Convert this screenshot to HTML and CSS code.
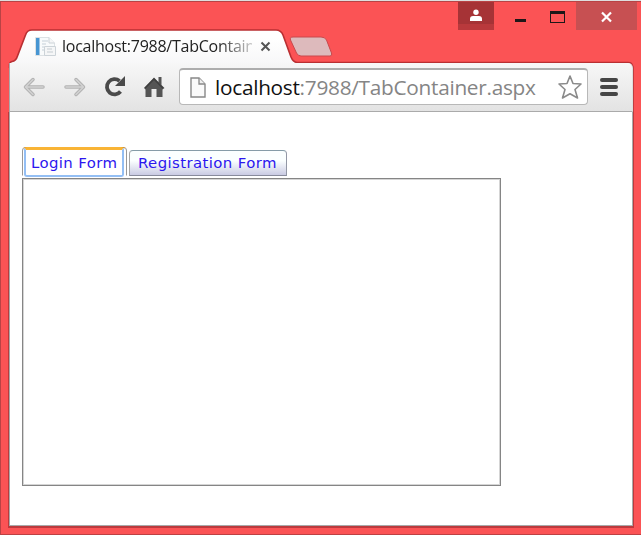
FILE: index.html
```html
<!DOCTYPE html>
<html lang="en">
<head>
<meta charset="utf-8">
<title>localhost:7988/TabContainer.aspx</title>
<link rel="stylesheet" href="styles.css">
</head>
<body>
<div class="window">
  <header class="titlebar">
    <svg class="frame" width="641" height="68" viewBox="0 0 641 68">
      <defs><linearGradient id="tabfill" x1="0" y1="0" x2="0" y2="1"><stop offset="0.2" stop-color="#fff"/><stop offset="1" stop-color="#f6f6f7"/></linearGradient></defs>
      <path d="M9.5 68V65Q9.500 62 12 61.500Q16 61 17.500 56L25.500 35Q27 30 32 30H276Q281 30 283 35L291 57Q293 62 297 62.500H628Q632.500 62.500 632.500 67V68Z" fill="url(#tabfill)" stroke="#b92f32" stroke-width="1.600"/>
      <path d="M293 37H321Q325 37 326.500 40L331.500 53Q332.500 56 330 56H301Q298 56 296.500 53L290.500 40Q289.500 37 293 37Z" fill="#ddbabc" stroke="#c9494c"/>
    </svg>
    <div class="browser-tab">
      <svg class="favicon" width="22" height="21" viewBox="0 0 22 21">
        <path d="M.500 1.500H14L19.500 7V19.500H.500Z" fill="#f8fafb" stroke="#dce1e4"/>
        <path d="M1 2H4.500V19H1Z" fill="#4795d2"/>
        <path d="M7 5H13M7 8H11M7 11H9M7 14H9" stroke="#c5d0d8"/>
        <path d="M14 1.500V7H19.500M9.500 10.500H20.500V19.500H9.500Z" fill="#f5f6f7" stroke="#ccd3d8"/>
        <path d="M12 13H17M12 16H18" stroke="#c5ccd1"/>
      </svg>
      <span class="tab-title">localhost:7988/TabContain</span>
      <svg class="tab-close" width="11" height="11" viewBox="0 0 11 11"><path d="M1.500 1.500L9.500 9.500M9.500 1.500L1.500 9.500" stroke="#555" stroke-width="2"/></svg>
    </div>
    <div class="controls">
      <div class="user"><svg width="14" height="13" viewBox="0 0 14 13"><circle cx="7" cy="3.200" r="2.700" fill="#fff"/><path d="M1 12V10Q1 7 4 7H10Q13 7 13 10V12Z" fill="#fff"/></svg></div>
      <div class="minimize"></div>
      <div class="maximize"></div>
      <div class="close"><svg width="13" height="12" viewBox="0 0 13 12"><path d="M2 1.500L11 10.500M11 1.500L2 10.500" stroke="#fff" stroke-width="2.200"/></svg></div>
    </div>
  </header>
  <nav class="toolbar">
    <svg class="nav-icons" width="160" height="48" viewBox="9 63 160 48">
      <g fill="none" stroke-linecap="round" stroke-linejoin="round">
        <path d="M26 87H43M33 79.500L25.500 87L33 94.500" stroke="#b2b2b2" stroke-width="3.500"/>
        <path d="M26 87H43M33 79.500L25.500 87L33 94.500" stroke="#d2d2d2" stroke-width="1.500"/>
        <path d="M66 87H83M76 79.500L83.500 87L76 94.500" stroke="#b2b2b2" stroke-width="3.500"/>
        <path d="M66 87H83M76 79.500L83.500 87L76 94.500" stroke="#d2d2d2" stroke-width="1.500"/>
      </g>
      <path d="M119.500 81A7.600 7.600 0 1 0 120.500 91.500" fill="none" stroke="#4a4a4a" stroke-width="3.800"/>
      <path d="M125 76V86H115Z" fill="#4a4a4a"/>
      <path d="M144 88L154 77.500L158.500 82V77H161.500V85L164.500 88L162.500 89.500V97H156.500V89H151.500V97H145.500V89.500Z" fill="#555"/>
      <path d="M145 88.300L154 79L163 88.300" fill="none" stroke="#3f3f3f" stroke-width="1.500"/>
    </svg>
    <div class="address">
      <svg class="page-icon" width="16" height="21" viewBox="0 0 16 21"><path d="M1 1H9L15 7V20H1Z" fill="#fafafa" stroke="#888" stroke-width="1.400"/><path d="M9 1V7H15" fill="#eee" stroke="#888" stroke-width="1.300"/></svg>
      <span class="url"><span class="host">localhost</span>:7988/TabContainer.aspx</span>
      <svg class="star" width="26" height="26" viewBox="0 0 26 26"><path d="M13 2L16 9.500L24 10L18 15.500L20.500 24L13 19.700L5.500 24L8 15.500L2 10L10 9.500Z" fill="#fff" stroke="#8b8b8b" stroke-width="1.600" stroke-linejoin="round"/></svg>
    </div>
    <div class="menu"><i></i><i></i><i></i></div>
  </nav>
  <main class="page">
    <div class="tabs">
      <div class="tab active"><a>Login Form</a></div>
      <div class="tab"><a>Registration Form</a></div>
    </div>
    <div class="panel"></div>
  </main>
</div>
</body>
</html>
```
FILE: styles.css
```css
* { box-sizing: border-box; }
body { margin: 0; }
.window {
  width: 641px;
  height: 535px;
  display: flex;
  flex-direction: column;
  padding: 0 8px 9px 9px;
  background: #fb5355;
  border-top: 1px solid #dedede;
  box-shadow: inset 1px 1px #b94345, inset 0 -1px #bd4143;
  position: relative;
  overflow: hidden;
}
.titlebar { height: 62px; flex: none; display: flex; justify-content: space-between; }
.frame { position: absolute; left: 0; top: -1px; }
.browser-tab {
  position: relative;
  display: flex;
  align-items: center;
  width: 264px;
  height: 24px;
  margin: 33px 0 0 26px;
}
.tab-title {
  width: 190px;
  margin-left: 5px;
  white-space: nowrap;
  font: 16px/22px "Open Sans", sans-serif;
  letter-spacing: -0.25px;
  color: #222;
  -webkit-mask-image: linear-gradient(to right, #000 155px, transparent 200px);
  mask-image: linear-gradient(to right, #000 155px, transparent 200px);
}
.tab-close { margin-left: 8px; }
.controls { position: relative; display: flex; height: 29px; margin-right: -4px; padding-top: 1px; }
.user {
  width: 36px;
  display: flex;
  justify-content: center;
  padding-top: 7px;
  background: linear-gradient(#a63336 22px, #b9393c 22px);
}
.minimize { width: 11px; height: 3px; margin: 17px 0 0 21px; background: #1e1718; }
.maximize { width: 15px; height: 12px; margin: 9px 11px 0 24px; border: 1px solid #1e1718; border-top-width: 3px; }
.close { width: 61px; display: flex; justify-content: center; padding-top: 9px; background: #c75052; }
.toolbar {
  position: relative;
  z-index: 1;
  height: 49px;
  flex: none;
  display: flex;
  border: 1px solid #aaa;
  border-color: #aaa #ddd #aaa #aaa;
  border-top: 0;
  border-radius: 0 5px 0 0;
  background: linear-gradient(#f7f7f7, #e3e3e3);
  box-shadow: 1px 0 #c13c3f;
}
.nav-icons { flex: none; margin-left: -1px; }
.address {
  width: 409px;
  height: 37px;
  display: flex;
  flex: none;
  align-items: center;
  margin: 5px 0 0 10px;
  padding: 0 4px 0 10px;
  background: #fff;
  border: 1px solid #b8b8b8;
  border-top: 2px solid #adadad;
  border-radius: 4px;
}
.page-icon { flex: none; }
.url {
  width: 345px;
  margin-left: 9px;
  font: 20.8px/32px "Open Sans", sans-serif;
  letter-spacing: -0.28px;
  white-space: nowrap;
  color: #858585;
}
.host { color: #111; }
.star { flex: none; }
.menu { display: flex; flex-direction: column; gap: 3px; margin: 15px 0 0 12px; }
.menu i { width: 18px; height: 4px; border-radius: 2px; background: #454545; }
.page {
  flex: 1;
  padding: 36px 0 0 12px;
  background: #fff;
  border: 1px solid #a9a9a9;
  border-top: 0;
  box-shadow: 0 1px 0 1px #bd3a3d;
}
.tabs { display: flex; align-items: flex-end; height: 30px; }
.tab {
  width: 158px;
  height: 26px;
  margin: 0 0 2px 2px;
  padding-left: 8px;
  border: 1px solid #92979d;
  border-color: #859ca8 #9297a5 #888b9c #a5a5a5;
  border-radius: 4px 4px 0 0;
  background: linear-gradient(#fbffff 40%, #cacbe3);
  font: 14.9px/24px "DejaVu Sans", Verdana, sans-serif;
  letter-spacing: 0.4px;
  white-space: nowrap;
  color: #2c16ef;
}
.active {
  width: 105px;
  height: 29px;
  margin-left: 0;
  padding: 0 2px 0 1px;
  border-color: #c78b32 #999 transparent #999;
  background: #fff;
}
.active a {
  display: block;
  height: 30px;
  margin-top: -1px;
  padding-left: 5px;
  border: 2px solid #94bff4;
  border-top: 3px solid #f9b435;
  border-radius: 3px;
  line-height: 26px;
}
.panel { width: 479px; height: 308px; border: 1px solid #858585; box-shadow: inset 1px 1px #d5d5d5, inset -1px -1px #d5d5d5; }
```
